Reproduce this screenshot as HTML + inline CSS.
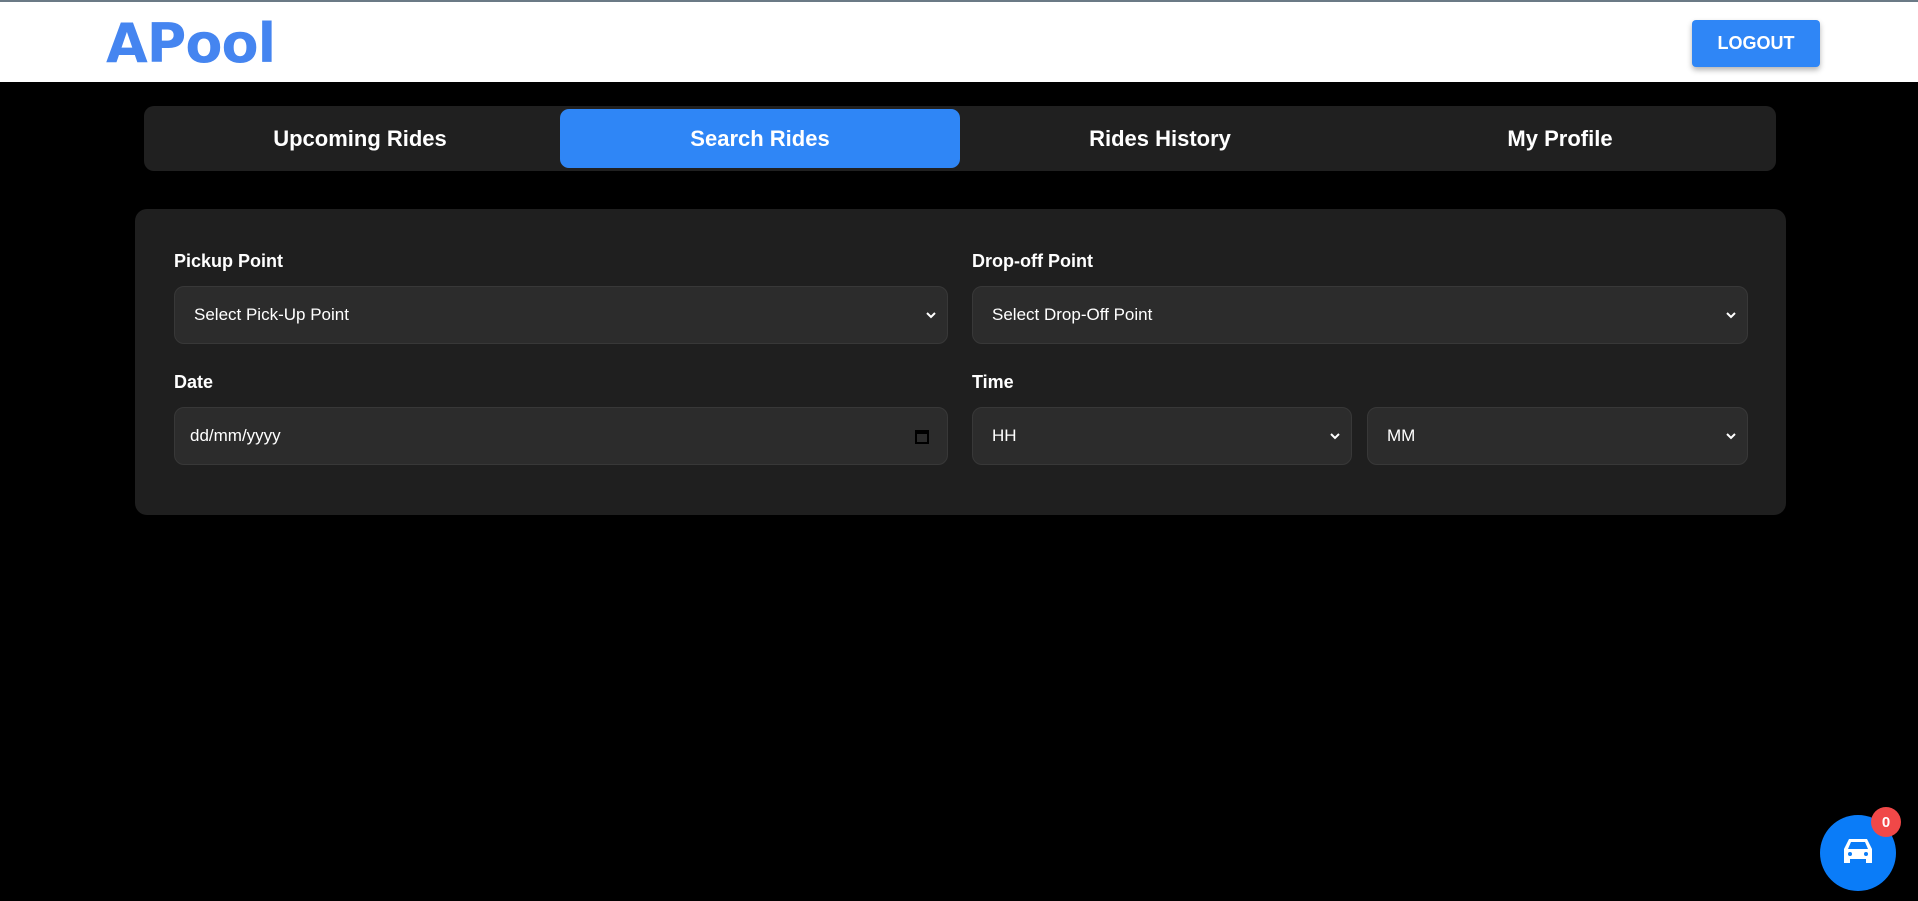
<!DOCTYPE html>
<html><head><style>
*{box-sizing:border-box;margin:0;padding:0}
body{width:1918px;height:901px;background:#000;font-family:"Liberation Sans",sans-serif;position:relative;overflow:hidden;color:#fff}
.hdr{position:absolute;left:0;top:0;width:1918px;height:82px;background:#fff;border-top:2px solid #6b7a86}
.logo{position:absolute;left:106px;top:10px;font-weight:900;font-size:54px;color:#4585f0;letter-spacing:-1px;font-family:"DejaVu Sans","Liberation Sans",sans-serif}
.logout{position:absolute;left:1692px;top:18px;width:128px;height:47px;background:#2f86f6;border-radius:4px;color:#fff;font-weight:bold;font-size:18px;display:flex;align-items:center;justify-content:center;box-shadow:0 3px 6px rgba(0,0,0,.3)}
.tabs{position:absolute;left:144px;top:106px;width:1632px;height:65px;background:#202020;border-radius:10px}
.tab{position:absolute;top:3px;height:59px;width:400px;display:flex;align-items:center;justify-content:center;font-weight:bold;font-size:22px}
.act{background:#2f86f6;border-radius:9px}
.card{position:absolute;left:135px;top:209px;width:1651px;height:306px;background:#1f1f1f;border-radius:12px}
.lbl{position:absolute;font-weight:bold;font-size:18px}
.in{position:absolute;height:58px;background:#2c2c2c;border:1px solid #383838;border-radius:10px;font-size:17px;display:flex;align-items:center;padding-left:19px}
.in svg{position:absolute;right:10px;top:23px}
</style></head><body>
<div class="hdr"><div class="logo">APool</div><div class="logout">LOGOUT</div></div>
<div class="tabs">
<div class="tab" style="left:16px">Upcoming Rides</div>
<div class="tab act" style="left:416px">Search Rides</div>
<div class="tab" style="left:816px">Rides History</div>
<div class="tab" style="left:1216px">My Profile</div>
</div>
<div class="card"></div>
<div class="lbl" style="left:174px;top:251px">Pickup Point</div>
<div class="lbl" style="left:972px;top:251px">Drop-off Point</div>
<div class="in" style="left:174px;top:286px;width:774px">Select Pick-Up Point<svg width="12" height="10" viewBox="0 0 12 10"><path d="M2 3l4 4 4-4" stroke="#fff" stroke-width="2" fill="none"/></svg></div>
<div class="in" style="left:972px;top:286px;width:776px">Select Drop-Off Point<svg width="12" height="10" viewBox="0 0 12 10"><path d="M2 3l4 4 4-4" stroke="#fff" stroke-width="2" fill="none"/></svg></div>
<div class="lbl" style="left:174px;top:372px">Date</div>
<div class="lbl" style="left:972px;top:372px">Time</div>
<div class="in" style="left:174px;top:407px;width:774px;padding-left:15px">dd/mm/yyyy<svg width="14" height="16" viewBox="0 0 14 16" style="right:18px;top:20px"><rect x="1" y="3" width="12" height="12" fill="none" stroke="#000" stroke-width="2"/><rect x="1" y="3" width="12" height="3" fill="#000"/></svg></div>
<div class="in" style="left:972px;top:407px;width:380px">HH<svg width="12" height="10" viewBox="0 0 12 10"><path d="M2 3l4 4 4-4" stroke="#fff" stroke-width="2" fill="none"/></svg></div>
<div class="in" style="left:1367px;top:407px;width:381px">MM<svg width="12" height="10" viewBox="0 0 12 10"><path d="M2 3l4 4 4-4" stroke="#fff" stroke-width="2" fill="none"/></svg></div>
<div style="position:absolute;left:1820px;top:815px;width:76px;height:76px;border-radius:50%;background:#0a7cf8"></div>
<svg style="position:absolute;left:1841px;top:837px" width="34" height="30" viewBox="0 0 34 30"><path d="M8 2h18l5 10v14h-6v-4H9v4H3V12z" fill="#fff"/><path d="M10 5h14l3 7H7z" fill="#0a7cf8"/><circle cx="9" cy="17" r="2" fill="#0a7cf8"/><circle cx="25" cy="17" r="2" fill="#0a7cf8"/></svg>
<div style="position:absolute;left:1871px;top:807px;width:30px;height:30px;border-radius:50%;background:#f04848;font-weight:bold;font-size:15px;display:flex;align-items:center;justify-content:center">0</div>
</body></html>
